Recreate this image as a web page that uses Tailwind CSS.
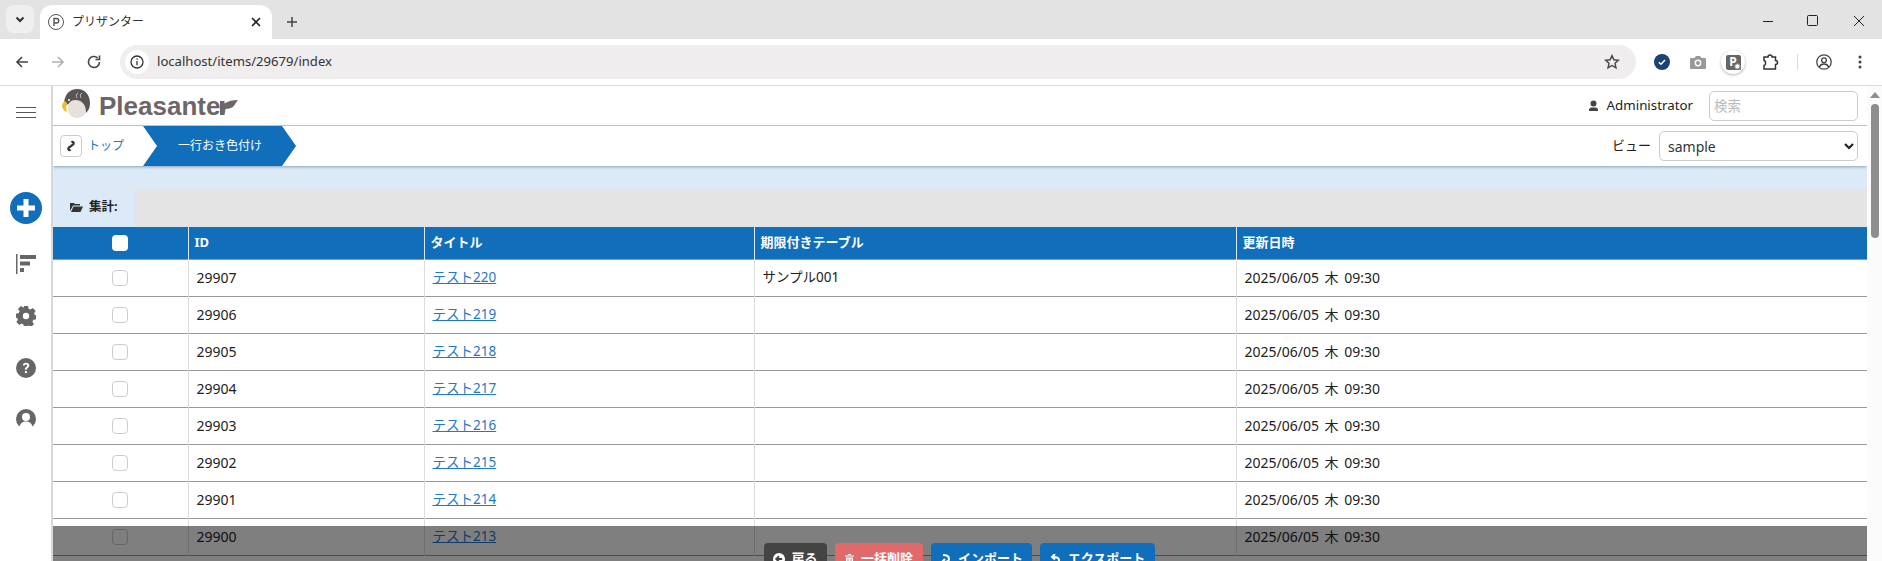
<!DOCTYPE html>
<html lang="ja">
  <head>
    <meta charset="UTF-8" />
    <title>プリザンター</title>
    <script src="https://cdn.jsdelivr.net/npm/@tailwindcss/browser@4"></script>
  </head>

  <body class="h-screen overflow-hidden bg-white text-[#333] font-['Noto_Sans','Noto_Sans_CJK_JP',sans-serif]">
    <div class="flex h-[561px] flex-col">
      <!-- Browser tab strip -->
      <div class="flex h-[39px] shrink-0 items-end bg-[#e3e3e3]">
        <div class="mb-[6px] ml-[6px] flex h-[28px] w-[28px] items-center justify-center rounded-lg bg-[#efefef]">
          <svg width="12" height="12" viewBox="0 0 12 12" fill="none" stroke="#333" stroke-width="2"><path d="M2.5 4.5 6 8l3.5-3.5" /></svg>
        </div>
        <div class="ml-[6px] flex h-[34px] w-[232px] items-center rounded-t-xl bg-white pl-[8px]">
          <svg width="16" height="16" viewBox="0 0 16 16" fill="none" stroke="#555"><circle cx="8" cy="8" r="7.5" /><path stroke-width="1.4" d="M6 12V4.5h2.5a2.2 2.2 0 0 1 0 4.5H6" /></svg>
          <span class="ml-[8px] text-[12px] text-[#333]">プリザンター</span>
          <svg class="ml-auto mr-[11px]" width="10" height="10" viewBox="0 0 10 10" stroke="#222" stroke-width="1.6"><path d="M1 1l8 8M9 1l-8 8" /></svg>
        </div>
        <svg class="mb-[11px] ml-[14px]" width="12" height="12" viewBox="0 0 12 12" stroke="#444" stroke-width="1.5"><path d="M6 1v10M1 6h10" /></svg>
        <div class="mb-[12px] ml-auto flex items-center">
          <svg width="12" height="12" viewBox="0 0 12 12" stroke="#222"><path d="M1 6.5h10" /></svg>
          <svg class="ml-[33px]" width="12" height="12" viewBox="0 0 12 12" fill="none" stroke="#222"><rect x="0.500" y="0.500" width="10" height="10" rx="1" /></svg>
          <svg class="ml-[34px] mr-[17px]" width="12" height="12" viewBox="0 0 12 12" stroke="#222"><path d="M1 1l10 10M11 1L1 11" /></svg>
        </div>
      </div>

      <!-- Browser toolbar -->
      <div class="flex h-[47px] shrink-0 items-center rounded-t-xl border-b border-[#dcdcdc] bg-white">
        <svg class="ml-[14px]" width="16" height="16" viewBox="0 0 16 16" fill="none" stroke="#444" stroke-width="1.6"><path d="M14 8H3M8 3 3 8l5 5" /></svg>
        <svg class="ml-[20px]" width="16" height="16" viewBox="0 0 16 16" fill="none" stroke="#b0b0b0" stroke-width="1.6"><path d="M2 8h11M8 3l5 5-5 5" /></svg>
        <svg class="ml-[20px]" width="16" height="16" viewBox="0 0 16 16" fill="none" stroke="#444" stroke-width="1.6"><path d="M13.5 8A5.5 5.5 0 1 1 11.6 3.8M13.5 1.5v4h-4" /></svg>
        <div class="ml-[18px] flex h-[34px] w-[1516px] items-center rounded-full bg-[#efeded] pl-[5px] pr-[16px]">
          <div class="flex h-[24px] w-[24px] items-center justify-center rounded-full bg-white">
            <svg width="14" height="14" viewBox="0 0 14 14" fill="none" stroke="#333" stroke-width="1.3"><circle cx="7" cy="7" r="6" /><path d="M7 6v4.2M7 3.4v1.4" /></svg>
          </div>
          <span class="ml-[8px] text-[13.100px] text-[#333]">localhost/items/29679/index</span>
          <svg class="ml-auto" width="16" height="16" viewBox="0 0 16 16" fill="none" stroke="#444" stroke-width="1.4"><path d="m8 1.6 1.9 4.2 4.5.5-3.4 3 1 4.5L8 11.5l-4 2.3 1-4.5-3.4-3 4.5-.5z" /></svg>
        </div>
        <svg class="ml-[18px]" width="16" height="16" viewBox="0 0 16 16"><circle cx="8" cy="8" r="8" fill="#1a4272" /><path d="M4.8 8.2 7 10.3l4-4.2" fill="none" stroke="#fff" stroke-width="1.5" /></svg>
        <svg class="ml-[20px]" width="16" height="14" viewBox="0 0 16 14" fill="#999"><path d="M1 3h3.5L6 1h4l1.5 2H15a1 1 0 0 1 1 1v9a1 1 0 0 1-1 1H1a1 1 0 0 1-1-1V4a1 1 0 0 1 1-1z" /><circle cx="8" cy="8" r="3.4" fill="#fff" /><circle cx="8" cy="8" r="2" /></svg>
        <div class="relative ml-[15px] flex h-[24px] w-[24px] items-center justify-center rounded-full bg-white shadow-[0_1px_3px_rgba(0,0,0,0.3)]">
          <span class="flex h-[15px] w-[15px] items-center justify-center rounded-[2px] bg-[#666] text-[12px] leading-none font-bold text-white">P</span>
          <svg class="absolute right-[3px] bottom-[3px]" width="8" height="8" viewBox="0 0 8 8" fill="#fff" stroke="#888"><circle cx="3.4" cy="3.4" r="2.6" /><path d="m5.4 5.4 2.2 2.2" /></svg>
        </div>
        <svg class="ml-[17px]" width="17" height="17" viewBox="0 0 17 17" fill="none" stroke="#333" stroke-width="1.5"><path d="M2 3h4a2 2 0 0 1 4 0h3.500v3.500a2 2 0 0 1 0 4V15H2v-3.500a2.200 2.200 0 0 0 1.500-2.500A2.200 2.200 0 0 0 2 6.500z" /></svg>
        <div class="ml-[18px] h-[16px] w-px bg-[#d8d8d8]"></div>
        <svg class="ml-[18px]" width="16" height="16" viewBox="0 0 16 16" fill="none" stroke="#444" stroke-width="1.300"><circle cx="8" cy="8" r="7.200" /><circle cx="8" cy="6.200" r="2.400" /><path d="M3.200 13c1-2.400 3-3 4.800-3s3.800.6 4.800 3" /></svg>
        <svg class="ml-[26px]" width="4" height="14" viewBox="0 0 4 14" fill="#444"><circle cx="2" cy="2" r="1.500" /><circle cx="2" cy="7" r="1.500" /><circle cx="2" cy="12" r="1.500" /></svg>
      </div>

      <div class="flex min-h-0 flex-1">
        <!-- Sidebar -->
        <aside class="relative w-[53px] shrink-0 border-r-2 border-[#d8d8d8] bg-white">
          <div class="mt-[21px] ml-[16px] flex w-[20px] flex-col gap-[4px]">
            <div class="h-px bg-[#555]"></div>
            <div class="h-px bg-[#555]"></div>
            <div class="h-px bg-[#555]"></div>
          </div>
          <svg class="mt-[74px] ml-[10px]" width="32" height="32" viewBox="0 0 32 32"><circle cx="16" cy="16" r="16" fill="#106eba" /><path d="M16 7v18M7 16h18" stroke="#fff" stroke-width="5" /></svg>
          <svg class="mt-[30px] ml-[16px]" width="20" height="20" viewBox="0 0 20 20" fill="#666"><rect width="1.500" height="20" /><rect x="4" y="1" width="16" height="4" /><rect x="4" y="7.500" width="10" height="4" /><rect x="4" y="14" width="4" height="4" /></svg>
          <svg class="mt-[32px] ml-[16px]" width="20" height="20" viewBox="0 0 20 20"><path fill="#666" d="M8 0h4l.6 2.800 1.800.8L16.800 2l2.800 2.900-1.500 2.400.7 1.700 1.200.3v4l-2.800.6-.8 1.800 1.600 2.400-2.900 2.800-2.400-1.500-1.700.7-.4 1H8l-.6-2.700-1.800-.8L3.200 19 .4 16.100l1.500-2.400-.7-1.700L0 11.700v-4l2.800-.6.800-1.800L2 2.900 4.900.1l2.400 1.500L8 1z" /><circle cx="10" cy="10" r="3.200" fill="#fff" /></svg>
          <svg class="mt-[32px] ml-[16px]" width="20" height="20" viewBox="0 0 20 20"><circle cx="10" cy="10" r="10" fill="#666" /><path d="M6.800 7.600C6.900 5.700 8.300 4.800 10 4.800c1.900 0 3.300 1 3.300 2.800 0 2.300-2.500 2.400-2.500 4.200H8.900c0-2.900 2.300-2.900 2.300-4.200 0-.7-.5-1.100-1.200-1.100-.8 0-1.200.5-1.300 1.100z" fill="#fff" /><rect x="8.900" y="13" width="2" height="2.200" fill="#fff" /></svg>
          <svg class="mt-[31px] ml-[16px]" width="20" height="20" viewBox="0 0 20 20"><circle cx="10" cy="10" r="10" fill="#666" /><circle cx="10" cy="8" r="4" fill="#fff" /><path d="M3.500 18c.6-4 3.500-5.500 6.500-5.500s5.900 1.500 6.500 5.500l-2 2h-9z" fill="#fff" /></svg>
        </aside>

        <!-- Page -->
        <main class="relative min-w-0 flex-1 overflow-hidden">
          <header class="flex h-[40px] items-center border-b border-[#ccc] bg-white pr-[9px]">
            <!-- Logo -->
            <svg class="ml-[9px] -mt-[4px]" width="29" height="30" viewBox="0 0 29 30">
              <path d="M6 14c3-3 8-4 12-2 4 2 6 6 6 11-2 4-5 6-9 6-5 0-8-3-9-8z" fill="#e8e0da" />
              <path d="M3 9C5 3 10 0 15 0c8 0 13 6 13 14 0 4-1 7-4 10 0-6-2-10-6-12-4-2-8-1-10 1-1 2-3 3-5 3l-1-3z" fill="#595353" />
              <path d="M16 4c-2 1-2 3-1 5M20 4c-2 1-2 3-1 5" fill="none" stroke="#c9c4c0" stroke-width="1" />
              <path d="M3 12c-2 1-3 3-3 5 0 2 2 5 5 6-1-3-1-6 0-9z" fill="#eebf2a" />
              <circle cx="7" cy="11" r="1" fill="#fff" />
            </svg>
            <span class="ml-[8px] text-[26px] leading-none font-bold text-[#6e6568] font-['Liberation_Sans',sans-serif]">Pleasante</span>
            <svg class="mt-[3px]" width="18" height="15" viewBox="0 0 18 15"><path d="M0 1h4.500v2.500C8 1 13 0 18 0c-2 2-3 5-5 7-2 1-5 2-7.500 2L4.500 15H0z" fill="#6e6568" /></svg>
            <svg class="ml-auto" width="11" height="11" viewBox="0 0 11 11" fill="#444"><circle cx="5.500" cy="3.500" r="3" /><path d="M1 11V9l2-1.500h5L10 9v2z" /></svg>
            <span class="ml-[8px] text-[13.300px] text-[#222]">Administrator</span>
            <input
              type="text"
              placeholder="検索"
              class="ml-[16px] h-[30px] w-[149px] rounded-[5px] border border-[#ccc] bg-white px-[4px] text-[13.500px] placeholder:text-[#bbb]"
            />
          </header>

          <nav class="relative flex h-[40px] items-center bg-white pr-[9px] shadow-[0_1px_3px_rgba(70,100,130,0.55)]">
            <button class="ml-[7px] flex h-[22px] w-[22px] items-center justify-center rounded-[4px] border border-[#ccc]">
              <svg width="12" height="12" viewBox="0 0 12 12" fill="none" stroke="#333" stroke-width="2.200"><path d="M5 6.500 3.500 8A1.500 1.500 0 0 0 4 10 1.500 1.500 0 0 0 5.500 9.500M7 5.500 8.500 4A1.500 1.500 0 0 0 8 2 1.500 1.500 0 0 0 6.500 2.500M5 7l2-2" /></svg>
            </button>
            <a class="ml-[6px] text-[12px] text-[#1f78c8]">トップ</a>
            <div class="ml-[19px] flex h-[40px] w-[153px] items-center bg-[#106eba] pl-[35px] text-[12px] text-white [clip-path:polygon(0_0,139px_0,153px_50%,139px_100%,0_100%,14px_50%)]">一行おき色付け</div>
            <span class="ml-auto text-[13px] text-[#222]">ビュー</span>
            <div class="relative ml-[8px] flex h-[30px] w-[199px] items-center rounded-[5px] border border-[#ccc] bg-white pl-[8px] text-[14px] text-[#333]">
              sample
              <svg class="absolute right-[2px]" width="12" height="10" viewBox="0 0 12 10" fill="none" stroke="#222" stroke-width="2.200"><path d="m2 3 4 4 4-4" /></svg>
            </div>
          </nav>

          <div class="h-[23px] bg-[#dceaf8]"></div>

          <div class="flex h-[38px]">
            <div class="flex w-[82px] items-center bg-[#dceaf8] pb-[2px] pl-[17px]">
              <svg width="13" height="10" viewBox="0 0 13 10" fill="#333"><path d="M0 1h4l1 1h5v1.500H3L0 9z" /><path d="M3.500 4.500H13L10.500 10H1z" /></svg>
              <span class="ml-[6px] text-[12.500px] font-bold text-[#222]">集計:</span>
            </div>
            <div class="flex-1 bg-[#e4e4e4]"></div>
          </div>

          <table class="w-full table-fixed border-collapse text-[14px] [word-spacing:2px] text-[#222]">
            <colgroup>
              <col class="w-[135px]" />
              <col class="w-[236px]" />
              <col class="w-[330px]" />
              <col class="w-[482px]" />
              <col />
            </colgroup>
            <thead>
              <tr class="h-[32px] bg-[#106eba] text-left text-[13px] font-bold text-white">
                <th class="border-r border-[#dce8f2] p-0"><div class="mx-auto h-[16px] w-[16px] rounded-[4px] bg-white"></div></th>
                <th class="border-r border-[#dce8f2] pl-[6px] font-bold">ID</th>
                <th class="border-r border-[#dce8f2] pl-[6px] font-bold">タイトル</th>
                <th class="border-r border-[#dce8f2] pl-[6px] font-bold">期限付きテーブル</th>
                <th class="pl-[6px] font-bold">更新日時</th>
              </tr>
            </thead>
            <tbody>
              <tr class="h-[37px] border-y border-[#999]">
                <td class="border-r border-[#ddd] p-0"><div class="mx-auto h-[16px] w-[16px] rounded-[4px] border border-[#ccc]"></div></td>
                <td class="border-r border-[#ddd] pl-[8px]">29907</td>
                <td class="border-r border-[#ddd] pl-[8px] text-[13.500px]"><a class="text-[#1f78c8] underline">テスト220</a></td>
                <td class="border-r border-[#ddd] pl-[8px] text-[13.500px]">サンプル001</td>
                <td class="pl-[8px]">2025/06/05 木 09:30</td>
              </tr>
              <tr class="h-[37px] border-b border-[#999]">
                <td class="border-r border-[#ddd] p-0"><div class="mx-auto h-[16px] w-[16px] rounded-[4px] border border-[#ccc]"></div></td>
                <td class="border-r border-[#ddd] pl-[8px]">29906</td>
                <td class="border-r border-[#ddd] pl-[8px] text-[13.500px]"><a class="text-[#1f78c8] underline">テスト219</a></td>
                <td class="border-r border-[#ddd] pl-[8px]"></td>
                <td class="pl-[8px]">2025/06/05 木 09:30</td>
              </tr>
              <tr class="h-[37px] border-b border-[#999]">
                <td class="border-r border-[#ddd] p-0"><div class="mx-auto h-[16px] w-[16px] rounded-[4px] border border-[#ccc]"></div></td>
                <td class="border-r border-[#ddd] pl-[8px]">29905</td>
                <td class="border-r border-[#ddd] pl-[8px] text-[13.500px]"><a class="text-[#1f78c8] underline">テスト218</a></td>
                <td class="border-r border-[#ddd] pl-[8px]"></td>
                <td class="pl-[8px]">2025/06/05 木 09:30</td>
              </tr>
              <tr class="h-[37px] border-b border-[#999]">
                <td class="border-r border-[#ddd] p-0"><div class="mx-auto h-[16px] w-[16px] rounded-[4px] border border-[#ccc]"></div></td>
                <td class="border-r border-[#ddd] pl-[8px]">29904</td>
                <td class="border-r border-[#ddd] pl-[8px] text-[13.500px]"><a class="text-[#1f78c8] underline">テスト217</a></td>
                <td class="border-r border-[#ddd] pl-[8px]"></td>
                <td class="pl-[8px]">2025/06/05 木 09:30</td>
              </tr>
              <tr class="h-[37px] border-b border-[#999]">
                <td class="border-r border-[#ddd] p-0"><div class="mx-auto h-[16px] w-[16px] rounded-[4px] border border-[#ccc]"></div></td>
                <td class="border-r border-[#ddd] pl-[8px]">29903</td>
                <td class="border-r border-[#ddd] pl-[8px] text-[13.500px]"><a class="text-[#1f78c8] underline">テスト216</a></td>
                <td class="border-r border-[#ddd] pl-[8px]"></td>
                <td class="pl-[8px]">2025/06/05 木 09:30</td>
              </tr>
              <tr class="h-[37px] border-b border-[#999]">
                <td class="border-r border-[#ddd] p-0"><div class="mx-auto h-[16px] w-[16px] rounded-[4px] border border-[#ccc]"></div></td>
                <td class="border-r border-[#ddd] pl-[8px]">29902</td>
                <td class="border-r border-[#ddd] pl-[8px] text-[13.500px]"><a class="text-[#1f78c8] underline">テスト215</a></td>
                <td class="border-r border-[#ddd] pl-[8px]"></td>
                <td class="pl-[8px]">2025/06/05 木 09:30</td>
              </tr>
              <tr class="h-[37px] border-b border-[#999]">
                <td class="border-r border-[#ddd] p-0"><div class="mx-auto h-[16px] w-[16px] rounded-[4px] border border-[#ccc]"></div></td>
                <td class="border-r border-[#ddd] pl-[8px]">29901</td>
                <td class="border-r border-[#ddd] pl-[8px] text-[13.500px]"><a class="text-[#1f78c8] underline">テスト214</a></td>
                <td class="border-r border-[#ddd] pl-[8px]"></td>
                <td class="pl-[8px]">2025/06/05 木 09:30</td>
              </tr>
              <tr class="h-[37px] border-b border-[#999]">
                <td class="border-r border-[#ddd] p-0"><div class="mx-auto h-[16px] w-[16px] rounded-[4px] border border-[#ccc]"></div></td>
                <td class="border-r border-[#ddd] pl-[8px]">29900</td>
                <td class="border-r border-[#ddd] pl-[8px] text-[13.500px]"><a class="text-[#1f78c8] underline">テスト213</a></td>
                <td class="border-r border-[#ddd] pl-[8px]"></td>
                <td class="pl-[8px]">2025/06/05 木 09:30</td>
              </tr>
            </tbody>
          </table>

          <!-- Command bar overlay, cut off by the window -->
          <div class="absolute inset-x-0 top-[440px] flex h-[60px] gap-[8px] bg-black/50 pt-[17px] pl-[711px]">
            <button class="flex h-[32px] w-[63px] items-center justify-center rounded-[4px] bg-[#444] text-[13px] font-bold text-white">
              <svg class="mr-[6px]" width="12" height="12" viewBox="0 0 13 13"><circle cx="6.500" cy="6.500" r="6.500" fill="#fff" /><path d="M10 6.500H4M6.500 3.500l-3 3 3 3" fill="none" stroke="#444" stroke-width="2" /></svg>
              戻る
            </button>
            <button class="flex h-[32px] w-[88px] items-center justify-center rounded-[4px] bg-[#e06a6a] text-[13px] font-bold text-white">
              <svg class="mr-[7px]" width="9" height="11" viewBox="0 0 9 11" fill="#fff"><rect x="3" y="0" width="3" height="1" /><rect x="0" y="1.500" width="9" height="1" /><path d="M1 3.500h7V11H1zM2.500 4.500v5h1v-5zM5.500 4.500v5h1v-5z" fill-rule="evenodd" /></svg>
              一括削除
            </button>
            <button class="flex h-[32px] w-[101px] items-center justify-center rounded-[4px] bg-[#106eba] text-[13px] font-bold text-white">
              <svg class="mr-[8px]" width="10" height="11" viewBox="0 0 10 11" fill="none" stroke="#fff" stroke-width="2"><path d="M3 1c3 0 6 1 6 4 0 2-3 3-6 3M5 5 2 8l3 2.500" /></svg>
              インポート
            </button>
            <button class="flex h-[32px] w-[115px] items-center justify-center rounded-[4px] bg-[#106eba] text-[13px] font-bold text-white">
              <svg class="mr-[8px]" width="10" height="11" viewBox="0 0 10 11" fill="none" stroke="#fff" stroke-width="2"><path d="M2 10c3 0 7-1 7-4 0-2-3-3-6-3M5 0 2 3l3 2.500" /></svg>
              エクスポート
            </button>
          </div>
        </main>

        <!-- Page scrollbar -->
        <div class="flex w-[15px] shrink-0 flex-col items-center bg-[#fbfbfb] pt-[6px]">
          <div class="h-0 w-0 border-x-[5px] border-b-[6px] border-x-transparent border-b-[#8e8e8e]"></div>
          <div class="mt-[6px] h-[134px] w-[8px] rounded-full bg-[#8e8e8e]"></div>
        </div>
      </div>
    </div>
  </body>
</html>
